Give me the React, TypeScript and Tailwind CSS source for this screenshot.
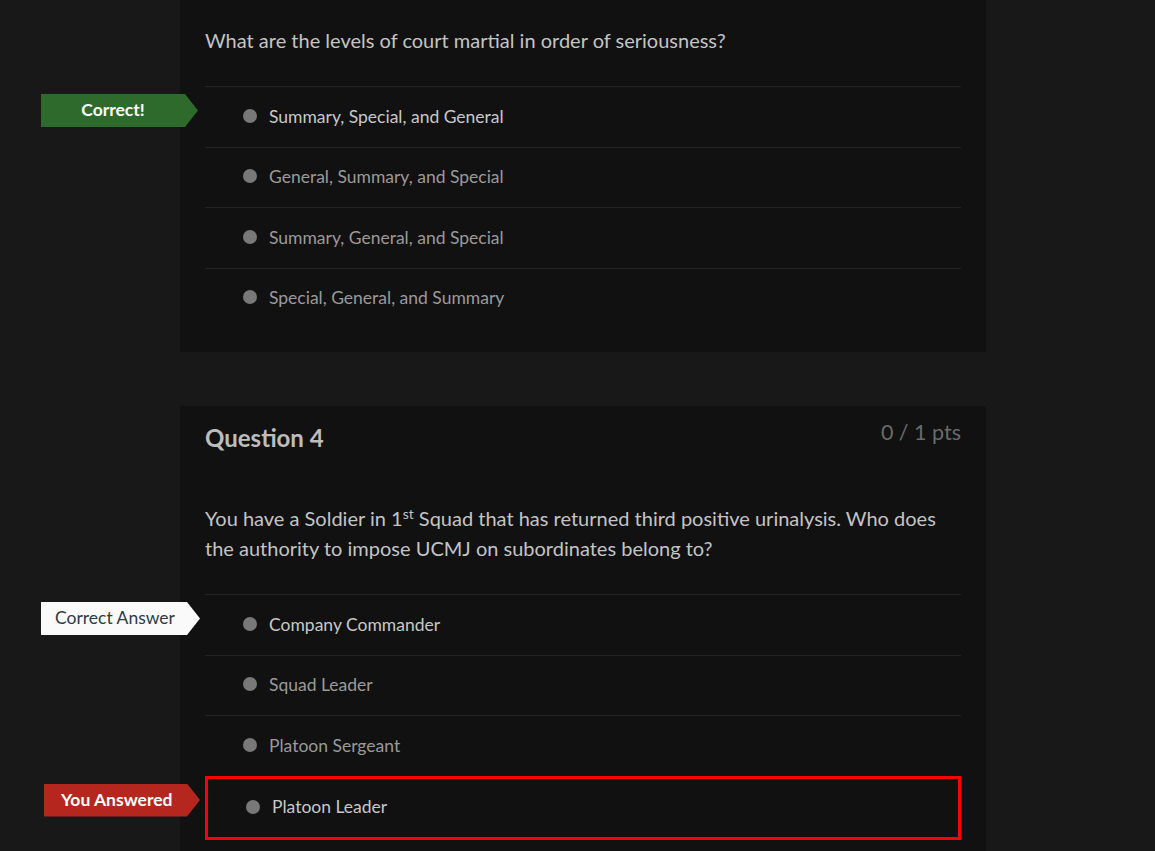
import { ReactNode } from "react";

interface Answer {
  text: string;
  bright?: boolean;
  label?: "correct" | "correctAnswer" | "youAnswered";
  wrong?: boolean;
}

const q3Answers: Answer[] = [
  { text: "Summary, Special, and General", bright: true, label: "correct" },
  { text: "General, Summary, and Special" },
  { text: "Summary, General, and Special" },
  { text: "Special, General, and Summary" },
];

const q4Answers: Answer[] = [
  { text: "Company Commander", bright: true, label: "correctAnswer" },
  { text: "Squad Leader" },
  { text: "Platoon Sergeant" },
  { text: "Platoon Leader", bright: true, label: "youAnswered", wrong: true },
];

const arrow =
  "absolute h-[33px] flex items-center text-[17.5px] [clip-path:polygon(0_0,calc(100%-13px)_0,100%_50%,calc(100%-13px)_100%,0_100%)]";

function Tag({ kind }: { kind: Answer["label"] }) {
  if (kind === "correct")
    return (
      <div className={`${arrow} top-[7px] right-[calc(100%+7px)] w-[157px] bg-[#2d6a2b] text-white font-bold justify-center pr-[13px]`}>
        Correct!
      </div>
    );
  if (kind === "correctAnswer")
    return (
      <div className={`${arrow} top-[7px] right-[calc(100%+5px)] w-[159px] bg-[#fafafa] text-[#2d3b45] pl-[14px]`}>
        Correct Answer
      </div>
    );
  return (
    <div className={`${arrow} top-[5px] right-[calc(100%+8px)] w-[156px] bg-[#b5261f] text-white font-bold pl-[17px]`}>
      You Answered
    </div>
  );
}

function Row({ a }: { a: Answer }) {
  if (a.wrong) {
    return (
      <div className="relative h-[64px] border-[3px] border-[#ff0000] flex items-center pl-[38px] gap-[12px]">
        <Tag kind={a.label} />
        <span className="w-[14px] h-[14px] rounded-full bg-[#787878] -mt-[2px]" />
        <span className="text-[17.5px] text-[#c8c8c8]">{a.text}</span>
      </div>
    );
  }
  return (
    <div className="relative h-[60.5px] border-t border-[#242424] flex items-center pl-[38px] gap-[12px]">
      {a.label && <Tag kind={a.label} />}
      <span className="w-[14px] h-[14px] rounded-full bg-[#787878] -mt-[2px]" />
      <span className={`text-[17.5px] ${a.bright ? "text-[#c8c8c8]" : "text-[#9a9a9a]"}`}>{a.text}</span>
    </div>
  );
}

function Card({ children, className = "" }: { children: ReactNode; className?: string }) {
  return <div className={`w-[806px] bg-[#111111] px-[25px] ${className}`}>{children}</div>;
}

export default function App() {
  return (
    <div className="min-h-[851px] bg-[#181818] pl-[180px] font-['Lato','Noto_Sans',sans-serif]">
      <Card className="pt-[25px] pb-[24px]">
        <p className="text-[20px] leading-[30px] text-[#c4c4c4] mb-[31px]">
          What are the levels of court martial in order of seriousness?
        </p>
        {q3Answers.map((a) => (
          <Row key={a.text} a={a} />
        ))}
      </Card>

      <div className="h-[54px]" />

      <Card className="pt-[16px]">
        <div className="flex justify-between items-start">
          <h2 className="text-[24px] leading-[32px] font-bold text-[#bdbdbd]">Question 4</h2>
          <span className="text-[21.5px] leading-[22px] -mt-[1px] text-[#6a6a6a]">0 / 1 pts</span>
        </div>
        <p className="mt-[49px] mb-[31px] text-[20px] leading-[30px] text-[#c4c4c4]">
          You have a Soldier in 1<sup className="text-[14px] leading-[0]">st</sup> Squad that has returned third positive
          urinalysis. Who does the authority to impose UCMJ on subordinates belong to?
        </p>
        {q4Answers.map((a) => (
          <Row key={a.text} a={a} />
        ))}
        <div className="h-[20px]" />
      </Card>
    </div>
  );
}
